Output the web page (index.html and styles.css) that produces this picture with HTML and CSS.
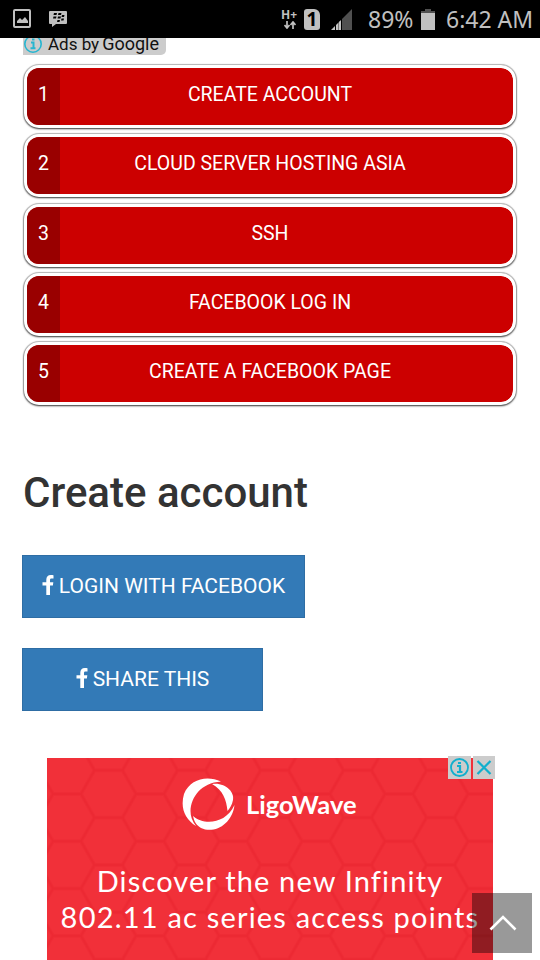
FILE: index.html
```html
<!DOCTYPE html>
<html lang="en">
<head>
    <meta charset="UTF-8">
    <meta name="viewport" content="width=device-width, initial-scale=1.0">
    <title>Create account</title>
    <link rel="stylesheet" href="styles.css">
</head>
<body>

<header class="status-bar">
    <svg class="notifications" width="56" height="20" viewBox="0 0 56 20">
        <rect x="1" y="1" width="16" height="17" rx="1" fill="none" stroke="#c0c0c0" stroke-width="2"/>
        <path d="M4 14v-2l3-3 2 2 3-3 3 4v2z" fill="#c0c0c0"/>
        <path d="M37 2h16q1 0 1 1v11q0 1-1 1H43l-4 3v-3h-2q-1 0-1-1V3q0-1 1-1z" fill="#c0c0c0"/>
        <path d="M41 4h3l-.5 2h-3zM45.500 4h3l-.5 2h-3zM40.500 7.500h3l-.5 2h-3zM45 7.500h3l-.5 2h-3zM49 6h2.500l-.5 2h-2.500zM48.500 9.500h2.500l-.5 2h-2.500zM44.500 11h2.500l-.5 2h-2.500z" fill="#000"/>
    </svg>
    <div class="network">
        <span>H+</span>
        <svg width="12" height="8" viewBox="0 0 12 8"><path d="M3 0v6M.5 4L3 7l2.500-3M9 8V2M6.500 4L9 1l2.500 3" fill="none" stroke="#c0c0c0" stroke-width="1.700"/></svg>
    </div>
    <span class="sim">1</span>
    <svg class="signal" width="21" height="21" viewBox="0 0 21 21">
        <path d="M21 0v21H11V10z" fill="#505050"/>
        <path d="M0 21l4-4v4zM5 21v-5l2-2v7z" fill="#c4c4c4"/>
        <path d="M7 21v-7l2-2v9z" fill="#777"/>
        <path d="M8 21v-8l2-2v10z" fill="#c4c4c4"/>
    </svg>
    <span class="battery-text">89%</span>
    <svg class="battery" width="14" height="21" viewBox="0 0 14 21">
        <path d="M4 0h6v2h4v2H0V2h4z" fill="#505050"/>
        <path d="M0 4h14v17H0z" fill="#c0c0c0"/>
    </svg>
    <span class="clock">6:42 AM</span>
</header>

<main class="page">
    <div class="ads-label">
        <svg width="20" height="20" viewBox="0 0 20 20">
            <circle cx="10" cy="10" r="8.200" fill="none" stroke="#26b5d0" stroke-width="1.600"/>
            <path d="M8 8.500h2.500V14M7.500 14.300h5M9 5.500h2.500" fill="none" stroke="#26b5d0" stroke-width="2"/>
        </svg>
        <span>Ads by</span> <span class="google">Google</span>
    </div>

    <nav class="ad-links">
        <a class="ad-link"><span class="num">1</span><span class="label">CREATE ACCOUNT</span></a>
        <a class="ad-link"><span class="num">2</span><span class="label">CLOUD SERVER HOSTING ASIA</span></a>
        <a class="ad-link"><span class="num">3</span><span class="label">SSH</span></a>
        <a class="ad-link"><span class="num">4</span><span class="label">FACEBOOK LOG IN</span></a>
        <a class="ad-link"><span class="num">5</span><span class="label">CREATE A FACEBOOK PAGE</span></a>
    </nav>

    <h1>Create account</h1>

    <a class="btn btn-login">
        <svg width="12" height="20" viewBox="0 0 12 20"><path d="M11.500.2v3.200H9.600C8.200 3.400 8 4 8 5v2.200h3.300l-.4 3.400H8V20H4.300v-9.400H.5V7.200h3.800V4.700C4.300 1.700 6 0 8.800 0c1.200 0 2.300.1 2.700.2z" fill="#fff"/></svg>
        <span>LOGIN WITH FACEBOOK</span>
    </a>
    <a class="btn btn-share">
        <svg width="12" height="20" viewBox="0 0 12 20"><path d="M11.500.2v3.200H9.600C8.200 3.400 8 4 8 5v2.200h3.300l-.4 3.400H8V20H4.300v-9.400H.5V7.200h3.800V4.700C4.300 1.700 6 0 8.800 0c1.200 0 2.300.1 2.700.2z" fill="#fff"/></svg>
        <span>SHARE THIS</span>
    </a>

    <section class="banner">
        <svg class="banner-bg" width="446" height="202">
            <defs>
                <pattern id="hex" width="83" height="47.3" patternUnits="userSpaceOnUse" patternTransform="translate(20 12.300)">
                    <g fill="none" stroke="#e8202c">
                        <path d="M0 23.650H14L27.500 0H55.500L69 23.650H83M14 23.650L27.500 47.300H55.500L69 23.650" stroke-width="4" opacity=".25"/>
                        <path d="M0 23.650H14L27.500 0H55.500L69 23.650H83M14 23.650L27.500 47.300H55.500L69 23.650" stroke-width="2" opacity=".3"/>
                    </g>
                </pattern>
            </defs>
            <rect width="446" height="202" fill="url(#hex)"/>
        </svg>
        <div class="brand">
            <svg width="53" height="53" viewBox="0 0 53 53" fill="#fff">
                <path d="M39 3.500C25-3 8 1 2 16C-2 30 3 41 14 48C10 43 8.500 38 8.500 33C9 19 19 5 39 3.500z"/>
                <path d="M30 6C43 4 53 14 51 22C50 27 48 30 45.500 33C44.500 22 41 12 30 6z"/>
                <path d="M52.500 27C50 47 32 56 19 50C14 47 12 43 11 38C21 47 43 47 52.500 27z"/>
            </svg>
            <span>LigoWave</span>
        </div>
        <p class="line-one">Discover the new Infinity</p>
        <p class="line-two">802.11 ac series access points</p>
        <div class="ad-choices">
            <svg width="23" height="23" viewBox="0 0 23 23">
                <circle cx="11.500" cy="11.500" r="8.500" fill="none" stroke="#12afcd" stroke-width="1.800"/>
                <path d="M9 10h3v6M9 16h5.500M10 7h3" fill="none" stroke="#12afcd" stroke-width="2.200"/>
            </svg>
            <svg width="22" height="23" viewBox="0 0 22 23"><path d="M4.500 5l13 13M17.500 5l-13 13" stroke="#12afcd" stroke-width="2.200"/></svg>
        </div>
    </section>
</main>

<a class="to-top">
    <svg width="28" height="16" viewBox="0 0 28 16"><path d="M1.500 14.500L14 2l12.500 12.500" fill="none" stroke="#fff" stroke-width="2.600"/></svg>
</a>

</body>
</html>
```
FILE: styles.css
```css
* {
    box-sizing: border-box;
}
body {
    margin: 0;
    height: 960px;
    overflow: hidden;
    background-color: white;
    font-family: Roboto, sans-serif;
}
svg {
    display: block;
    flex: none;
}
.status-bar {
    position: relative;
    z-index: 2;
    display: flex;
    align-items: center;
    height: 38px;
    padding-left: 13px;
    background-color: #000;
    color: #c0c0c0;
    font-family: "Noto Sans", sans-serif;
    font-size: 23px;
    white-space: nowrap;
}
.network {
    width: 17px;
    margin-left: 212px;
    font-size: 12px;
    font-weight: bold;
    line-height: 12px;
}
.network svg {
    margin-left: 3px;
}
.sim {
    width: 16px;
    height: 21px;
    margin-left: 6px;
    border-radius: 3px 6px 3px 3px;
    background-color: #c0c0c0;
    color: #000;
    font-size: 19px;
    font-weight: bold;
    line-height: 21px;
    text-align: center;
}
.signal {
    margin-left: 11px;
}
.battery-text {
    width: 47px;
    margin-left: 16px;
}
.battery {
    margin-left: 6px;
}
.clock {
    margin-left: 11px;
}
.page {
    padding: 0 23px;
}
.ads-label {
    display: flex;
    align-items: center;
    width: 143px;
    height: 24px;
    margin-top: -7px;
    padding-top: 1px;
    border-radius: 0 0 5px 0;
    background-color: #ccc;
    color: #111;
    font-size: 17px;
    line-height: 20px;
}
.ads-label span {
    margin-left: 5px;
}
.ads-label .google {
    margin-left: 3px;
    font-size: 18px;
}
.ad-links {
    display: flex;
    flex-direction: column;
    gap: 6.3px;
    padding: 10px 0 0 1px;
}
.ad-link {
    display: flex;
    width: 492px;
    height: 63px;
    border: 3px solid white;
    border-radius: 15px;
    background-color: #c00;
    background-clip: padding-box;
    box-shadow: 0 1px 2px 0 #444, 0 0 1px 1px #bbb;
    color: white;
    font-size: 19.5px;
    line-height: 54px;
    text-align: center;
    overflow: hidden;
}
.num {
    width: 33px;
    background-color: #900;
}
.label {
    flex: 1;
    padding-right: 33px;
}
h1 {
    margin: 62.8px 0 0;
    color: #333;
    font-size: 42px;
    font-weight: 500;
    line-height: 50px;
}
.btn {
    display: flex;
    align-items: center;
    justify-content: center;
    gap: 5px;
    height: 63px;
    margin-left: -1px;
    border: 1px solid #2e6da4;
    background-color: #337ab7;
    color: white;
    font-size: 21px;
}
.btn svg {
    margin-top: -3px;
}
.btn-login {
    width: 283px;
    margin-top: 37px;
}
.btn-share {
    width: 241px;
    margin-top: 30px;
}
.banner {
    position: relative;
    width: 446px;
    height: 202px;
    margin: 47px 0 0 24px;
    background-color: #f13039;
    color: white;
    font-family: Lato, sans-serif;
    white-space: nowrap;
}
.banner-bg {
    position: absolute;
    left: 0;
    top: 0;
}
.brand {
    position: relative;
    display: flex;
    align-items: center;
    gap: 11px;
    padding: 20px 0 0 135px;
    font-size: 25.5px;
    font-weight: bold;
}
.banner p {
    position: relative;
    margin: 0;
    font-size: 29px;
    line-height: 36px;
    text-align: center;
}
.banner .line-one {
    margin-top: 32px;
    letter-spacing: 1.15px;
}
.banner .line-two {
    letter-spacing: 1.2px;
}
.ad-choices {
    position: absolute;
    top: -2px;
    right: -2px;
    display: flex;
    gap: 2px;
}
.ad-choices svg {
    background-color: #ccc;
}
.to-top {
    position: fixed;
    left: 472px;
    top: 893px;
    display: flex;
    align-items: center;
    justify-content: center;
    width: 60px;
    height: 60px;
    padding-left: 2px;
    background-color: rgba(0, 0, 0, 0.4);
}
```
